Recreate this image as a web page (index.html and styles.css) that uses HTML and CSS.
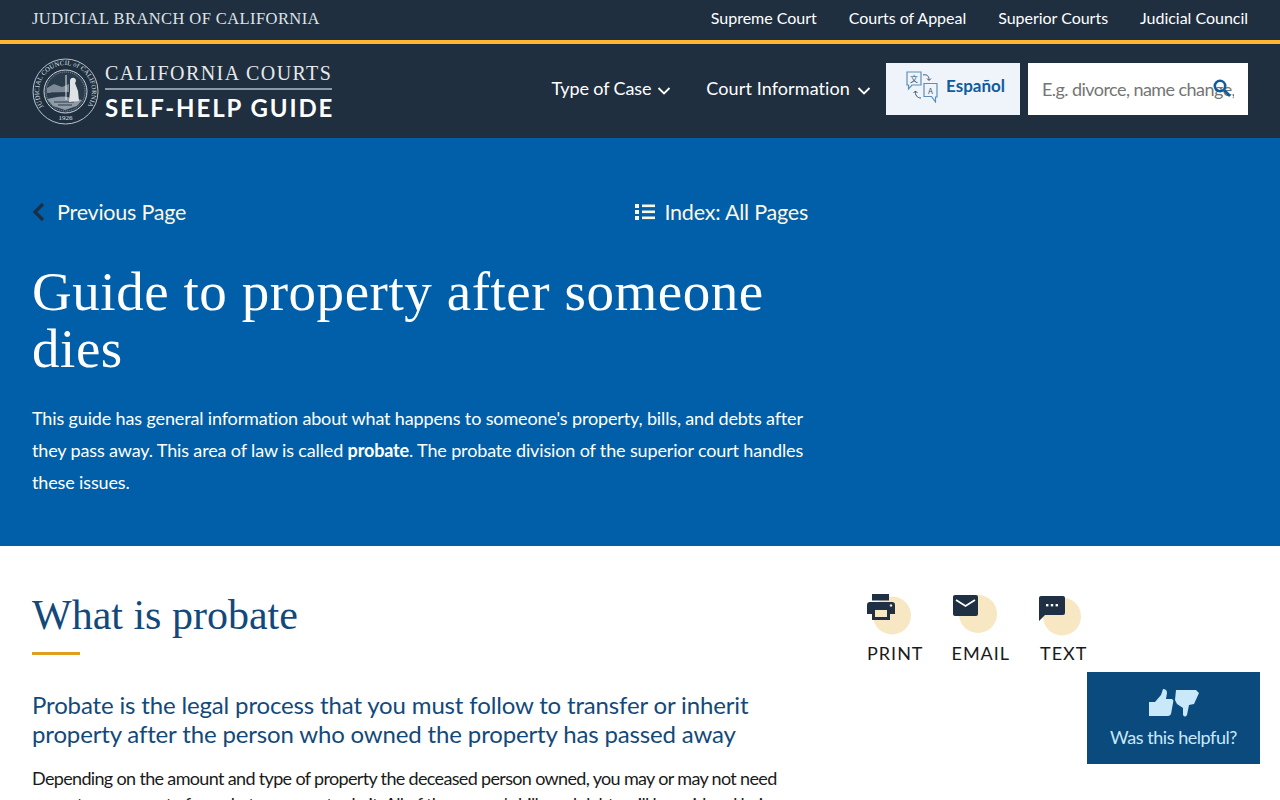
FILE: index.html
```html
<!DOCTYPE html>
<html lang="en">
<head>
<meta charset="utf-8">
<title>Guide to property after someone dies</title>
<link rel="stylesheet" href="styles.css">
</head>
<body>
<div class="topbar">
  <span class="branch">JUDICIAL BRANCH OF CALIFORNIA</span>
  <nav class="topnav">
    <a href="#">Supreme Court</a>
    <a href="#">Courts of Appeal</a>
    <a href="#">Superior Courts</a>
    <a href="#">Judicial Council</a>
  </nav>
</div>
<header class="header">
  <a class="brand" href="#">
    <svg class="seal" width="67" height="67" viewBox="0 0 67 67">
      <defs><path id="sealarc" d="M11.8 48.7 A26.5 26.5 0 1 1 55.2 48.7"/></defs>
      <circle cx="33.5" cy="33.5" r="32.5" fill="none" stroke="#b9c3cc" stroke-width="1"/>
      <circle cx="33.5" cy="33.5" r="21.5" fill="#2a3b4c" stroke="#cfd6dc" stroke-width="1"/>
      <circle cx="33.5" cy="33.5" r="19.5" fill="none" stroke="#8f9ba6" stroke-width="1" stroke-dasharray="1 1"/>
      <text class="seal-text"><textPath href="#sealarc" textLength="114" lengthAdjust="spacing">JUDICIAL COUNCIL of CALIFORNIA</textPath></text>
      <text class="seal-year" x="33.5" y="62" text-anchor="middle">1926</text>
      <path d="M15 30 L22 26 L30 29 L37 26 L37 34 L15 35 Z" fill="#7d8a96"/>
      <path d="M15 41 L30 38 L50 42 L45 48 L33 52 L21 48 Z" fill="#8f9ba6"/>
      <path d="M19 35 H33 M18 38 H32 M22 44 H42 M26 47 H40" stroke="#2a3b4c" stroke-width="1"/>
      <path d="M34 17 V42" stroke="#e8ecef" stroke-width="1"/>
      <path d="M38 23 a3 3 0 1 1 5 2 l3 8 l1 10 l-10 1 l1 -11 Z" fill="#dfe3e6"/>
    </svg>
    <span class="brand-text">
      <span class="brand-top">CALIFORNIA COURTS</span>
      <span class="brand-bottom">SELF-HELP GUIDE</span>
    </span>
  </a>
  <nav class="mainnav">
    <a class="mainnav-link" href="#">Type of Case
      <svg width="14" height="8" viewBox="0 0 14 8"><path d="M1.5 1 L7 6.5 L12.5 1" fill="none" stroke="#fff" stroke-width="1.8"/></svg>
    </a>
    <a class="mainnav-link mainnav-wide" href="#">Court Information
      <svg width="14" height="8" viewBox="0 0 14 8"><path d="M1.5 1 L7 6.5 L12.5 1" fill="none" stroke="#fff" stroke-width="1.8"/></svg>
    </a>
  </nav>
  <a class="lang" href="#">
    <svg width="32" height="32" viewBox="0 0 32 32">
      <path d="M1 1 H15 V14 H6 L2.5 18 V14 H1 Z" fill="none" stroke="#5a8fbd" stroke-width="1.2"/>
      <text class="lang-glyph" x="8" y="11" text-anchor="middle">文</text>
      <path d="M18 25.5 V12.5 H31 V26 H29.5 V31 L25.5 25.5 Z" fill="none" stroke="#5a8fbd" stroke-width="1.2"/>
      <text class="lang-glyph" x="24.5" y="23" text-anchor="middle">A</text>
      <path d="M17 4 C21 3 23 5 23 9 M21 7.5 L23 9.5 L25 7.5" fill="none" stroke="#33566f" stroke-width="1"/>
      <path d="M15 27 C11 27 9 24 9.5 20 M7.5 22 L9.5 20 L11.5 22" fill="none" stroke="#33566f" stroke-width="1"/>
    </svg>
    <span class="lang-label">Español</span>
  </a>
  <form class="search">
    <input class="search-input" type="text" placeholder="E.g. divorce, name change, guardianship">
    <svg class="search-icon" width="18" height="19" viewBox="0 0 18 19"><circle cx="7" cy="7" r="5.2" fill="none" stroke="#0f5c9c" stroke-width="2.6"/><path d="M11 11 L17 17" stroke="#0f5c9c" stroke-width="2.6"/></svg>
  </form>
</header>
<section class="hero">
  <div class="hero-inner">
    <div class="hero-links">
      <a class="hero-link" href="#">
        <svg class="prev-icon" width="13" height="20" viewBox="0 0 13 20"><path d="M11 2 L3 10 L11 18" fill="none" stroke="#1c2f42" stroke-width="3.2"/></svg>
        Previous Page
      </a>
      <a class="hero-link index-link" href="#">
        <svg width="20" height="16" viewBox="0 0 20 16" fill="#fdf6e3"><rect width="4" height="4"/><rect y="6" width="4" height="4"/><rect y="12" width="4" height="4"/><rect x="7" y="0.5" width="13" height="2.6"/><rect x="7" y="6.5" width="13" height="2.6"/><rect x="7" y="12.5" width="13" height="2.6"/></svg>
        Index: All Pages
      </a>
    </div>
    <h1 class="hero-title">Guide to property after someone dies</h1>
    <p class="hero-text">This guide has general information about what happens to someone's property, bills, and debts after they pass away. This area of law is called <strong>probate</strong>. The probate division of the superior court handles these issues.</p>
  </div>
</section>
<main class="main">
  <article class="content">
    <h2 class="section-title">What is probate</h2>
    <div class="rule"></div>
    <p class="lead">Probate is the legal process that you must follow to transfer or inherit property after the person who owned the property has passed away</p>
    <p class="body-text">Depending on the amount and type of property the deceased person owned, you may or may not need a court case as part of a probate process to do it. All of the person's bills and debts will be paid and heirs inherit the rest.</p>
  </article>
  <aside class="share">
    <a class="share-item" href="#">
      <svg width="46" height="41" viewBox="0 0 46 41">
        <circle cx="25" cy="21.5" r="19" fill="#f7e8c3"/>
        <path d="M5 0 H22 V6.5 H5 Z" fill="#1f3044"/>
        <path d="M3 8 H25 a3 3 0 0 1 3 3 V20 H23 V26 H5 V20 H0 V11 a3 3 0 0 1 3 -3 Z" fill="#1f3044"/>
        <rect x="8" y="16" width="12" height="7" fill="#f7e8c3"/>
        <circle cx="24" cy="11.5" r="1.2" fill="#f7e8c3"/>
      </svg>
      <span>PRINT</span>
    </a>
    <a class="share-item" href="#">
      <svg width="46" height="41" viewBox="0 0 46 41">
        <circle cx="26" cy="20" r="19" fill="#f7e8c3"/>
        <rect x="1" y="1" width="25" height="21" rx="2" fill="#1f3044"/>
        <path d="M4 6 L13.5 12 L23 6" fill="none" stroke="#fff" stroke-width="1.8"/>
      </svg>
      <span>EMAIL</span>
    </a>
    <a class="share-item share-text" href="#">
      <svg width="46" height="41" viewBox="0 0 46 41">
        <circle cx="22" cy="22.5" r="19" fill="#f7e8c3"/>
        <path d="M1 2 H23 a2 2 0 0 1 2 2 V19 a2 2 0 0 1 -2 2 H5 L-1 27 V4 a2 2 0 0 1 2 -2 Z" fill="#1f3044"/>
        <rect x="6" y="10" width="2.4" height="2.4" fill="#fff"/><rect x="10.8" y="10" width="2.4" height="2.4" fill="#fff"/><rect x="15.6" y="10" width="2.4" height="2.4" fill="#fff"/>
      </svg>
      <span>TEXT</span>
    </a>
  </aside>
</main>
<button class="feedback" type="button">
  <svg width="50" height="29" viewBox="0 0 50 29" fill="#c9e8fa">
    <path d="M0 13 H6 L12 6 L14 0 Q18 0 18 4 L17 10 H23 Q25 11 24 14 L22 25 Q21 27 19 27 H0 Z"/>
    <path d="M27 1 H47 L50 4 L45 15 L40 16 L38 26 Q36 29 34 26 L34 19 L28 15 L26 11 Z"/>
  </svg>
  <span>Was this helpful?</span>
</button>
</body>
</html>
```
FILE: styles.css
```css
* { box-sizing: border-box; }
html, body { margin: 0; height: 100%; overflow: hidden; }
body { font-family: Lato, "Noto Sans", sans-serif; color: #1a1a1a; background: #fff; }
a { color: inherit; text-decoration: none; }

.topbar { height: 44px; padding: 0 32px 6px; background: #1f2f3f; border-bottom: 4px solid #fdb62f; display: flex; justify-content: space-between; align-items: center; color: #fff; }
.branch { font-family: "Liberation Serif", serif; font-size: 16.5px; letter-spacing: 0.42px; color: #dfe3e6; margin-top: 3px; }
.topnav { display: flex; gap: 32px; font-size: 16px; letter-spacing: -0.02px; }

.header { height: 94px; padding: 0 32px 4px; background: #1f2f3f; display: flex; align-items: center; color: #fff; }
.brand { display: flex; align-items: center; gap: 6px; margin: 4px auto 0 0; }
.seal { display: block; }
.seal-text { font-family: "Liberation Serif", serif; font-size: 6.6px; fill: #dfe3e6; }
.seal-year { font-family: "Liberation Serif", serif; font-size: 7px; fill: #dfe3e6; }
.brand-text { display: flex; flex-direction: column; margin-top: 2px; }
.brand-top { align-self: flex-start; font-family: "Liberation Serif", serif; font-size: 20px; letter-spacing: 1.45px; color: #e6e9ec; line-height: 24px; padding-bottom: 3px; border-bottom: 2px solid #8b99a6; }
.brand-bottom { font-size: 24px; font-weight: 700; letter-spacing: 1.9px; line-height: 32px; padding-top: 2px; }

.mainnav { display: flex; gap: 35px; margin: 0 15px 2px 0; }
.mainnav-link { display: flex; align-items: center; gap: 6px; font-size: 18px; letter-spacing: -0.12px; }
.mainnav-wide { gap: 7px; letter-spacing: 0.1px; }
.mainnav-link svg { margin-top: 5px; }

.lang { width: 134px; height: 52px; background: #eef4fa; display: flex; align-items: flex-start; padding: 8px 0 0 20px; gap: 8px; }
.lang-glyph { font-family: "Noto Sans CJK SC", "Liberation Sans", sans-serif; font-size: 8px; fill: #33566f; }
.lang-label { font-size: 17px; font-weight: 700; color: #0f5c9c; margin-top: 4px; }

.search { position: relative; width: 220px; height: 52px; margin-left: 8px; }
.search-input { width: 100%; height: 100%; border: 0; padding: 0 14px; font-family: Lato, sans-serif; font-size: 18px; letter-spacing: -0.56px; background: #fff; }
.search-input::placeholder { color: #757575; opacity: 1; }
.search-icon { position: absolute; left: 185px; top: 16px; }

.hero { height: 408px; background: #005fa8; color: #fff; padding: 0 32px; }
.hero-inner { width: 776px; padding-top: 60px; }
.hero-links { display: flex; justify-content: space-between; height: 28px; color: #fdf6e3; }
.hero-link { display: flex; align-items: center; gap: 12px; font-size: 21.5px; line-height: 28px; letter-spacing: -0.22px; }
.index-link { gap: 9px; }
.hero-title { margin: 37px 0 0; font-family: "Liberation Serif", serif; font-weight: 400; font-size: 55px; line-height: 57px; letter-spacing: 0.55px; }
.hero-text { margin: 25px 0 0; font-size: 18px; line-height: 32px; letter-spacing: -0.14px; }
.hero-text strong { font-weight: 700; }

.main { display: flex; padding: 0 32px; }
.content { width: 776px; flex: none; }
.section-title { margin: 46px 0 0; font-family: "Liberation Serif", serif; font-weight: 400; font-size: 42px; line-height: 46px; color: #13497a; }
.rule { width: 48px; height: 3px; margin-top: 14px; background: #e09f1f; }
.lead { margin: 35px 0 0; font-size: 24px; line-height: 29px; letter-spacing: -0.15px; color: #13497a; }
.body-text { margin: 17px 0 0; max-width: 752px; font-size: 18px; line-height: 26px; letter-spacing: -0.66px; }

.share { display: flex; gap: 28px; margin: 48px 0 0 59px; align-items: flex-start; }
.share-item { display: flex; flex-direction: column; }
.share-item svg { display: block; overflow: visible; }
.share-item span { font-size: 18px; letter-spacing: 1px; line-height: 24px; color: #1a1a1a; margin-top: 6px; }
.share-text { margin-left: 2px; }

.feedback { position: fixed; left: 1087px; top: 672px; width: 173px; height: 92px; border: 0; background: #0b4a7d; color: #c9e8fa; font-family: Lato, sans-serif; font-size: 18px; letter-spacing: -0.45px; display: flex; flex-direction: column; align-items: center; padding: 17px 0 0; gap: 8px; }
.feedback svg { display: block; }
```
